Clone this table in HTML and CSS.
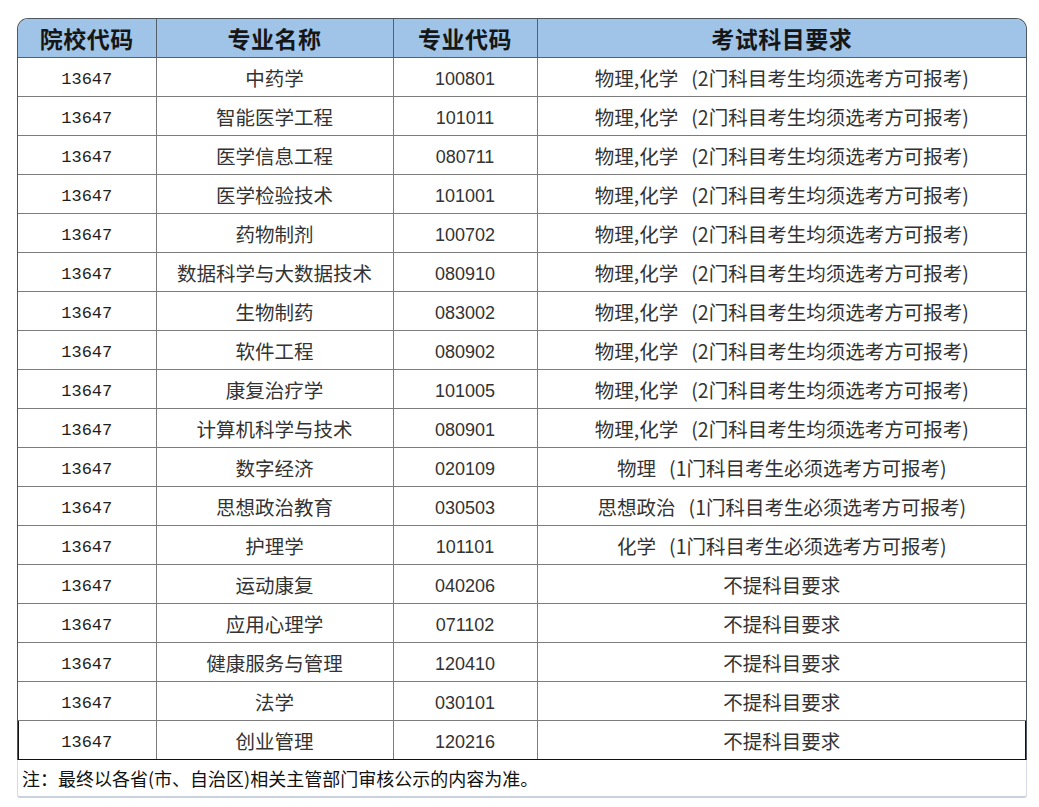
FILE: index.html
```html
<!DOCTYPE html>
<html lang="zh-CN">
<head>
<meta charset="utf-8">
<title>专业选考科目要求</title>
<link rel="stylesheet" href="styles.css">
</head>
<body>
<div class="card">
  <div class="table-wrap">
    <table class="majors">
      <colgroup>
        <col class="c1"><col class="c2"><col class="c3"><col class="c4">
      </colgroup>
      <thead>
        <tr><th>院校代码</th><th>专业名称</th><th>专业代码</th><th>考试科目要求</th></tr>
      </thead>
      <tbody>
        <tr><td class="sch">13647</td><td>中药学</td><td class="code">100801</td><td>物理,化学&nbsp;&nbsp;&nbsp;(2门科目考生均须选考方可报考)</td></tr>
        <tr><td class="sch">13647</td><td>智能医学工程</td><td class="code">101011</td><td>物理,化学&nbsp;&nbsp;&nbsp;(2门科目考生均须选考方可报考)</td></tr>
        <tr><td class="sch">13647</td><td>医学信息工程</td><td class="code">080711</td><td>物理,化学&nbsp;&nbsp;&nbsp;(2门科目考生均须选考方可报考)</td></tr>
        <tr><td class="sch">13647</td><td>医学检验技术</td><td class="code">101001</td><td>物理,化学&nbsp;&nbsp;&nbsp;(2门科目考生均须选考方可报考)</td></tr>
        <tr><td class="sch">13647</td><td>药物制剂</td><td class="code">100702</td><td>物理,化学&nbsp;&nbsp;&nbsp;(2门科目考生均须选考方可报考)</td></tr>
        <tr><td class="sch">13647</td><td>数据科学与大数据技术</td><td class="code">080910</td><td>物理,化学&nbsp;&nbsp;&nbsp;(2门科目考生均须选考方可报考)</td></tr>
        <tr><td class="sch">13647</td><td>生物制药</td><td class="code">083002</td><td>物理,化学&nbsp;&nbsp;&nbsp;(2门科目考生均须选考方可报考)</td></tr>
        <tr><td class="sch">13647</td><td>软件工程</td><td class="code">080902</td><td>物理,化学&nbsp;&nbsp;&nbsp;(2门科目考生均须选考方可报考)</td></tr>
        <tr><td class="sch">13647</td><td>康复治疗学</td><td class="code">101005</td><td>物理,化学&nbsp;&nbsp;&nbsp;(2门科目考生均须选考方可报考)</td></tr>
        <tr><td class="sch">13647</td><td>计算机科学与技术</td><td class="code">080901</td><td>物理,化学&nbsp;&nbsp;&nbsp;(2门科目考生均须选考方可报考)</td></tr>
        <tr><td class="sch">13647</td><td>数字经济</td><td class="code">020109</td><td>物理&nbsp;&nbsp;&nbsp;(1门科目考生必须选考方可报考)</td></tr>
        <tr><td class="sch">13647</td><td>思想政治教育</td><td class="code">030503</td><td>思想政治&nbsp;&nbsp;&nbsp;(1门科目考生必须选考方可报考)</td></tr>
        <tr><td class="sch">13647</td><td>护理学</td><td class="code">101101</td><td>化学&nbsp;&nbsp;&nbsp;(1门科目考生必须选考方可报考)</td></tr>
        <tr><td class="sch">13647</td><td>运动康复</td><td class="code">040206</td><td>不提科目要求</td></tr>
        <tr><td class="sch">13647</td><td>应用心理学</td><td class="code">071102</td><td>不提科目要求</td></tr>
        <tr><td class="sch">13647</td><td>健康服务与管理</td><td class="code">120410</td><td>不提科目要求</td></tr>
        <tr><td class="sch">13647</td><td>法学</td><td class="code">030101</td><td>不提科目要求</td></tr>
        <tr class="last"><td class="sch">13647</td><td>创业管理</td><td class="code">120216</td><td>不提科目要求</td></tr>
      </tbody>
    </table>
  </div>
  <div class="note">注：最终以各省(市、自治区)相关主管部门审核公示的内容为准。</div>
</div>
</body>
</html>
```
FILE: styles.css
```css
html, body {
  margin: 0;
  padding: 0;
  background: #ffffff;
}

body {
  font-family: "Noto Sans CJK SC", "Noto Sans", sans-serif;
  padding: 18px 0 0 17px;
}

.card {
  width: 1010px;
}

.table-wrap {
  border: 1px solid #4f5861;
  border-bottom: none;
  border-radius: 11px 11px 0 0;
  overflow: hidden;
}

.majors {
  width: 100%;
  border-collapse: collapse;
  table-layout: fixed;
}

.c1 { width: 138px; }
.c2 { width: 237px; }
.c3 { width: 144px; }
.c4 { width: auto; }

.majors th,
.majors td {
  padding: 0;
  text-align: center;
  vertical-align: middle;
  border-left: 1px solid #7c7c7c;
  border-bottom: 1px solid #7c7c7c;
  white-space: nowrap;
}

.majors th:first-child,
.majors td:first-child {
  border-left: none;
}

.majors th {
  height: 38px;
  background: #9fc4e8;
  color: #161616;
  font-size: 23px;
  font-weight: 700;
  letter-spacing: 0.5px;
  border-left-color: #56606a;
  border-bottom-color: #56606a;
}

.majors td {
  height: 38px;
  font-size: 19.5px;
  color: #333333;
}

.majors td.sch {
  height: 34px;
  padding-top: 4px;
  font-family: "Liberation Mono", "DejaVu Sans Mono", monospace;
  font-size: 17px;
  color: #1e1e1e;
}

.majors td.code {
  height: 34px;
  padding-top: 4px;
  font-family: "Liberation Sans", "Noto Sans", sans-serif;
  font-size: 18px;
  color: #333333;
}

.majors tr.last td {
  border-top: 1px solid #111111;
  border-bottom: 1px solid #111111;
}

.majors tr.last td:first-child {
  box-shadow: inset 1px 0 0 #111111;
}

.majors tr.last td:last-child {
  box-shadow: inset -1px 0 0 #111111;
}

.note {
  height: 36px;
  line-height: 36px;
  padding-left: 4px;
  font-size: 18px;
  color: #111111;
  border-left: 1px solid #d8d9e6;
  border-right: 1px solid #d8d9e6;
  border-bottom: 2px solid #c9d2de;
  border-radius: 0 0 3px 3px;
}
```
